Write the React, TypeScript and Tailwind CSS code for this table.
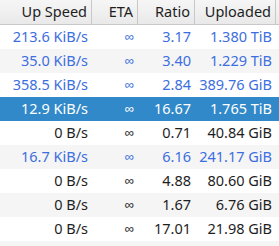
const rows = [
  { up: '213.6 KiB/s', ratio: '3.17', uploaded: '1.380 TiB', active: true },
  { up: '35.0 KiB/s', ratio: '3.40', uploaded: '1.229 TiB', active: true },
  { up: '358.5 KiB/s', ratio: '2.84', uploaded: '389.76 GiB', active: true },
  { up: '12.9 KiB/s', ratio: '16.67', uploaded: '1.765 TiB', active: true, selected: true },
  { up: '0 B/s', ratio: '0.71', uploaded: '40.84 GiB', active: false },
  { up: '16.7 KiB/s', ratio: '6.16', uploaded: '241.17 GiB', active: true },
  { up: '0 B/s', ratio: '4.88', uploaded: '80.60 GiB', active: false },
  { up: '0 B/s', ratio: '1.67', uploaded: '6.76 GiB', active: false },
  { up: '0 B/s', ratio: '17.01', uploaded: '21.98 GiB', active: false },
  { up: '', ratio: '', uploaded: '', active: false },
];

export default function App() {
  return (
    <div className="w-[279px] h-[246px] overflow-hidden bg-white text-[14.5px] font-['Noto_Sans',sans-serif]">
      <div className="flex h-[25px] border-b border-[#c8c8c8] bg-gradient-to-b from-[#f6f6f6] to-[#e9e9e9] text-[#1e1e1e]">
        <div className="w-[92px] flex items-center justify-end pr-[4px] border-r border-[#c8c8c8]">Up Speed</div>
        <div className="w-[46px] flex items-center justify-end pr-[4px] border-r border-[#c8c8c8]">ETA</div>
        <div className="w-[57px] flex items-center justify-end pr-[4px] border-r border-[#c8c8c8]">Ratio</div>
        <div className="w-[81px] flex items-center justify-end pr-[4px] border-r border-[#c8c8c8]">Uploaded</div>
        <div className="flex-1" />
      </div>
      {rows.map((r, i) => {
        const bg = r.selected ? 'bg-[#3189c9] text-white' : i % 2 === 1 ? 'bg-[#f5f5f5]' : 'bg-white';
        const color = r.selected ? '' : r.active ? 'text-[#3d6ee0]' : 'text-[#1e1e1e]';
        return (
          <div key={i} className={`flex h-[24px] items-center ${bg} ${color}`}>
            <div className="w-[92px] text-right pr-[4px]">{r.up}</div>
            <div className="w-[46px] text-right pr-[4px] text-[13px]">{r.up ? '∞' : ''}</div>
            <div className="w-[57px] text-right pr-[4px]">{r.ratio}</div>
            <div className="w-[81px] text-right pr-[4px]">{r.uploaded}</div>
          </div>
        );
      })}
    </div>
  );
}
